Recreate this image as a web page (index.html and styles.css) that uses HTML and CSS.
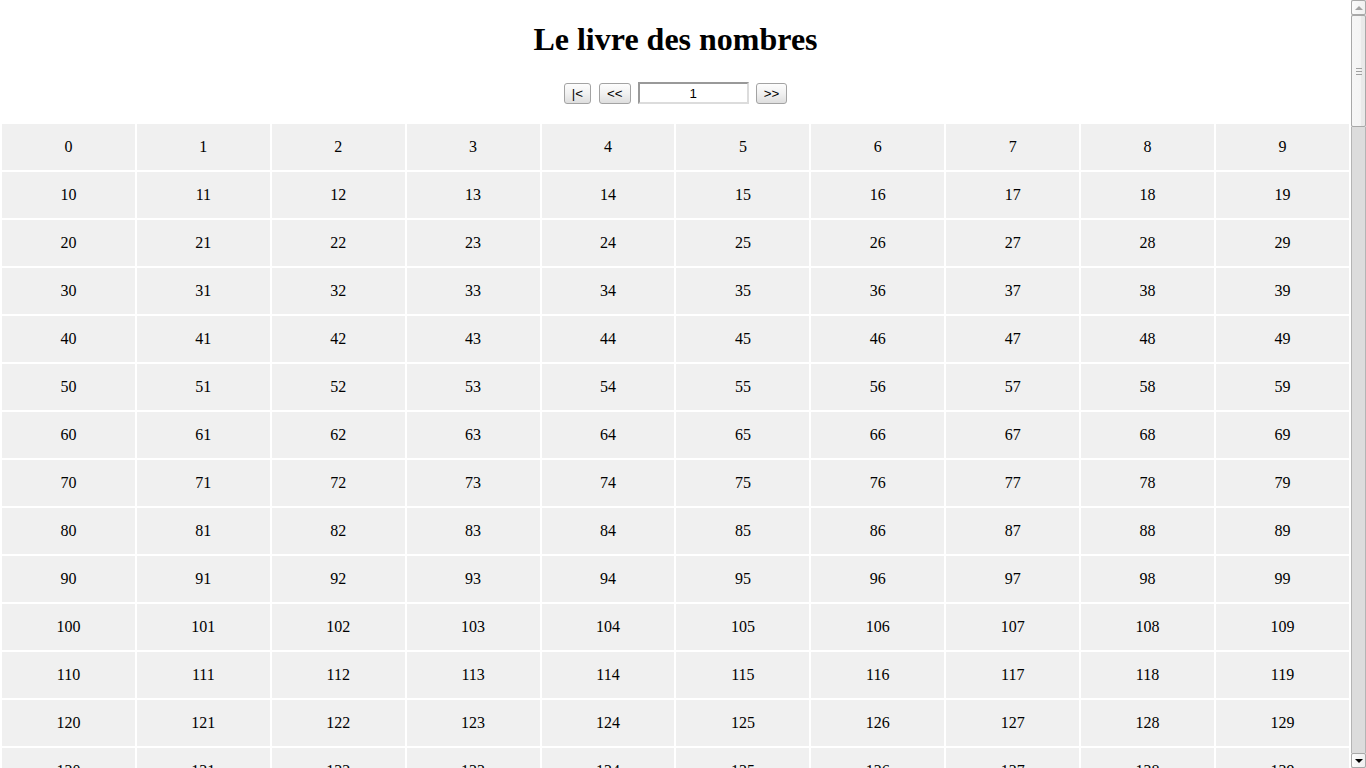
FILE: index.html
```html
<!DOCTYPE html>
<html lang="fr">
<head>
<meta charset="utf-8">
<title>Le livre des nombres</title>
<link rel="stylesheet" href="styles.css">
</head>
<body>
<div class="page">
  <h1 class="title">Le livre des nombres</h1>
  <div class="controls">
    <button class="btn" type="button">|&lt;</button>
    <button class="btn" type="button">&lt;&lt;</button>
    <input class="page-input" type="text" value="1">
    <button class="btn" type="button">&gt;&gt;</button>
  </div>
  <table class="grid">
    <tbody>
      <tr><td>0</td><td>1</td><td>2</td><td>3</td><td>4</td><td>5</td><td>6</td><td>7</td><td>8</td><td>9</td></tr>
      <tr><td>10</td><td>11</td><td>12</td><td>13</td><td>14</td><td>15</td><td>16</td><td>17</td><td>18</td><td>19</td></tr>
      <tr><td>20</td><td>21</td><td>22</td><td>23</td><td>24</td><td>25</td><td>26</td><td>27</td><td>28</td><td>29</td></tr>
      <tr><td>30</td><td>31</td><td>32</td><td>33</td><td>34</td><td>35</td><td>36</td><td>37</td><td>38</td><td>39</td></tr>
      <tr><td>40</td><td>41</td><td>42</td><td>43</td><td>44</td><td>45</td><td>46</td><td>47</td><td>48</td><td>49</td></tr>
      <tr><td>50</td><td>51</td><td>52</td><td>53</td><td>54</td><td>55</td><td>56</td><td>57</td><td>58</td><td>59</td></tr>
      <tr><td>60</td><td>61</td><td>62</td><td>63</td><td>64</td><td>65</td><td>66</td><td>67</td><td>68</td><td>69</td></tr>
      <tr><td>70</td><td>71</td><td>72</td><td>73</td><td>74</td><td>75</td><td>76</td><td>77</td><td>78</td><td>79</td></tr>
      <tr><td>80</td><td>81</td><td>82</td><td>83</td><td>84</td><td>85</td><td>86</td><td>87</td><td>88</td><td>89</td></tr>
      <tr><td>90</td><td>91</td><td>92</td><td>93</td><td>94</td><td>95</td><td>96</td><td>97</td><td>98</td><td>99</td></tr>
      <tr><td>100</td><td>101</td><td>102</td><td>103</td><td>104</td><td>105</td><td>106</td><td>107</td><td>108</td><td>109</td></tr>
      <tr><td>110</td><td>111</td><td>112</td><td>113</td><td>114</td><td>115</td><td>116</td><td>117</td><td>118</td><td>119</td></tr>
      <tr><td>120</td><td>121</td><td>122</td><td>123</td><td>124</td><td>125</td><td>126</td><td>127</td><td>128</td><td>129</td></tr>
      <tr><td>130</td><td>131</td><td>132</td><td>133</td><td>134</td><td>135</td><td>136</td><td>137</td><td>138</td><td>139</td></tr>
    </tbody>
  </table>
</div>
<div class="scrollbar" aria-hidden="true">
  <div class="sb-btn sb-up"><span class="arrow-up"></span></div>
  <div class="sb-thumb"><span class="grip"></span><span class="grip"></span><span class="grip"></span></div>
  <div class="sb-track"></div>
  <div class="sb-btn sb-down"><span class="arrow-down"></span></div>
</div>
</body>
</html>
```
FILE: styles.css
```css
html, body {
  margin: 0;
  padding: 0;
  height: 100%;
  overflow: hidden;
}
body {
  display: flex;
  background: #fff;
  color: #000;
  font-family: "Liberation Serif", "Times New Roman", serif;
  font-size: 16px;
}
.page {
  flex: 1;
  min-width: 0;
  height: 100%;
  overflow-y: auto;
  scrollbar-width: none;
}
.page::-webkit-scrollbar { display: none; }

.title {
  margin: 21px 0 25px;
  font-size: 32px;
  line-height: 36px;
  font-weight: bold;
  text-align: center;
}
.controls {
  display: flex;
  justify-content: center;
  align-items: center;
  gap: 8px;
  height: 22px;
  margin-bottom: 18px;
  font-family: "Liberation Sans", Arial, sans-serif;
  font-size: 13.33px;
}
.btn {
  height: 21px;
  margin: 0;
  padding: 0 7px;
  border: 1px solid #a3a3a3;
  border-radius: 3px;
  background: linear-gradient(#fdfdfd, #f1f1f1 50%, #dedede);
  color: #000;
  font-family: "Liberation Sans", Arial, sans-serif;
  font-size: 13.33px;
  line-height: 19px;
}
.controls .btn:nth-child(2) { margin-left: 0; }
.page-input {
  box-sizing: border-box;
  width: 111px;
  height: 22px;
  margin: 0 -1px 0 -1px;
  padding: 0 2px;
  border: 2px solid;
  border-color: #999 #dcdcdc #dcdcdc #999;
  background: #fff;
  color: #000;
  text-align: center;
  font-family: "Liberation Sans", Arial, sans-serif;
  font-size: 13.33px;
}
.grid {
  width: 100%;
  border-collapse: separate;
  border-spacing: 2px;
}
.grid td {
  height: 46px;
  padding: 0;
  background: #f0f0f0;
  text-align: center;
  vertical-align: middle;
  line-height: 18px;
}

.scrollbar {
  flex: 0 0 15px;
  display: flex;
  flex-direction: column;
  height: 100%;
  background: #dadada;
}
.sb-btn {
  box-sizing: border-box;
  flex: 0 0 15px;
  display: flex;
  align-items: center;
  justify-content: center;
  border: 1px solid #a8a8a8;
  border-radius: 2px;
  background: linear-gradient(to right, #fbfbfb, #f0f0f0);
}
.arrow-up {
  width: 0;
  height: 0;
  border-left: 4px solid transparent;
  border-right: 4px solid transparent;
  border-bottom: 4px solid #a3a3a3;
}
.arrow-down {
  width: 0;
  height: 0;
  border-left: 4px solid transparent;
  border-right: 4px solid transparent;
  border-top: 4px solid #000;
}
.sb-thumb {
  box-sizing: border-box;
  flex: 0 0 112px;
  display: flex;
  flex-direction: column;
  align-items: center;
  justify-content: center;
  gap: 2px;
  border: 1px solid #a8a8a8;
  border-radius: 2px;
  background: linear-gradient(to right, #f6f6f6, #f4f4f4 65%, #e9e9e9 70%, #e9e9e9);
}
.grip {
  width: 6px;
  height: 1px;
  background: #a0a0a0;
}
.sb-track {
  flex: 1;
  box-sizing: border-box;
  border-left: 1px solid #b4b4b4;
  border-right: 1px solid #b4b4b4;
  background: #dcdcdc;
}
```
